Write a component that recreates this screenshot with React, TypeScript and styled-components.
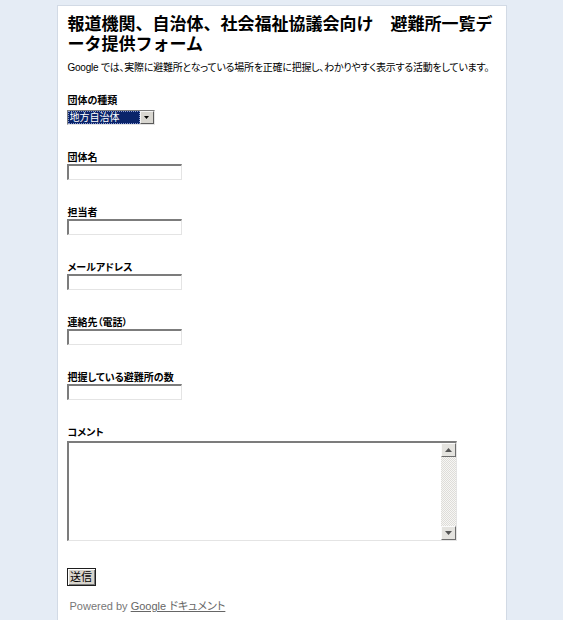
import React from 'react';
import styled, { createGlobalStyle } from 'styled-components';

const Theme = createGlobalStyle`
    html, body {
        margin: 0;
        padding: 0;
        background: #e5ecf5;
        font-family: "Liberation Sans", "Noto Sans CJK JP", sans-serif;
        color: #000;
    }
`;

const Page = styled.div`
    display: flex;
    justify-content: center;
    padding-top: 5px;
    min-height: 100vh;
    box-sizing: border-box;
`;

const Sheet = styled.main`
    width: 450px;
    box-sizing: border-box;
    min-height: calc(100vh - 5px);
    background: #fff;
    border: 1px solid #d2dae5;
    border-bottom: none;
    padding: 9px 11px 20px 9px;
`;

const Title = styled.h1`
    margin: 0 0 6px 1px;
    font-size: 17px;
    line-height: 20px;
    font-weight: bold;
`;

const Intro = styled.p`
    margin: 0 0 19px 1px;
    font-size: 10px;
    line-height: 14px;
    letter-spacing: -0.25px;
    white-space: nowrap;
    font-feature-settings: "palt";
`;

const Form = styled.form`
    display: flex;
    flex-direction: column;
    align-items: flex-start;
    gap: 26px;
`;

const Field = styled.div`
    display: flex;
    flex-direction: column;
    align-items: flex-start;
`;

const Label = styled.label<{ $space?: number }>`
    display: block;
    margin: 0 0 ${(p) => p.$space ?? 0}px 1px;
    font-size: 10px;
    line-height: 13px;
    font-weight: bold;
    font-feature-settings: "palt";
`;

const sunken = `
    border-style: solid;
    border-color: #7c7c7c #e4e4e4 #e4e4e4 #7c7c7c;
`;

const TextInput = styled.input`
    ${sunken}
    border-width: 2px 1px 1px 2px;
    width: 115px;
    height: 16px;
    box-sizing: border-box;
    padding: 0 2px;
    margin: 0;
    font: 11px "Liberation Sans", "Noto Sans CJK JP", sans-serif;
    background: #fff;
    outline: none;
`;

const SelectFrame = styled.div`
    ${sunken}
    border-width: 1px;
    width: 88px;
    height: 15px;
    box-sizing: border-box;
    display: flex;
    background: #fff;
`;

const Select = styled.select`
    appearance: none;
    flex: 1;
    min-width: 0;
    height: 13px;
    margin: 0;
    padding: 0 0 0 1px;
    border: 1px dotted #8a9ad0;
    box-sizing: border-box;
    background: #0a246a;
    color: #fff;
    font: 10px/11px "Liberation Sans", "Noto Sans CJK JP", sans-serif;
    outline: none;
`;

const DropButton = styled.span`
    width: 14px;
    height: 13px;
    box-sizing: border-box;
    display: flex;
    align-items: center;
    justify-content: center;
    background: #d8d6d0;
    border-style: solid;
    border-width: 1px;
    border-color: #f4f4f4 #5a5a5a #5a5a5a #f4f4f4;
`;

const CommentFrame = styled.div`
    ${sunken}
    border-width: 2px 1px 1px 2px;
    width: 390px;
    height: 100px;
    box-sizing: border-box;
    display: flex;
    margin-top: 2px;
    background: #fff;
`;

const CommentArea = styled.textarea`
    flex: 1;
    border: none;
    margin: 0;
    padding: 2px;
    resize: none;
    outline: none;
    overflow: hidden;
    font: 11px "Liberation Sans", "Noto Sans CJK JP", sans-serif;
`;

const ScrollTrack = styled.div`
    width: 15px;
    display: flex;
    flex-direction: column;
    justify-content: space-between;
    background: repeating-conic-gradient(#f6f6f4 0 25%, #dedcd8 0 50%) 0 0 / 2px 2px;
`;

const ScrollButton = styled.span`
    width: 15px;
    height: 14px;
    box-sizing: border-box;
    display: flex;
    align-items: center;
    justify-content: center;
    background: #e4e3df;
    border-style: solid;
    border-width: 1px;
    border-color: #fafafa #6e6e6e #6e6e6e #fafafa;
`;

const Submit = styled.button`
    margin-top: 1px;
    width: 29px;
    height: 18px;
    padding: 0;
    box-sizing: border-box;
    border: 1px solid #1e1e1e;
    box-shadow: inset 1px 1px 0 #fff, inset -1px -1px 0 #7a7a7a;
    background: #d8d5cd;
    font: 11px/14px "Liberation Sans", "Noto Sans CJK JP", sans-serif;
    color: #000;
`;

const Footer = styled.p`
    margin: 13px 0 0 3px;
    font-size: 11px;
    line-height: 14px;
    color: #777;
    font-feature-settings: "palt";
`;

const FooterLink = styled.a`
    color: #666;
    text-decoration: underline;
`;

const Arrow = ({ up }: { up?: boolean }) => (
    <svg width="7" height="4" viewBox="0 0 7 4">
        <path d={up ? 'M0 4 L3.5 0 L7 4 Z' : 'M0 0 L7 0 L3.5 4 Z'} fill="#555" />
    </svg>
);

const textFields = ['団体名', '担当者', 'メールアドレス', '連絡先（電話）', '把握している避難所の数'];

export default function App() {
    return (
        <Page>
            <Theme />
            <Sheet>
                <Title>報道機関、自治体、社会福祉協議会向け　避難所一覧データ提供フォーム</Title>
                <Intro>
                    Google では、実際に避難所となっている場所を正確に把握し、わかりやすく表示する活動をしています。
                </Intro>
                <Form onSubmit={(e) => e.preventDefault()}>
                    <Field>
                        <Label $space={3}>団体の種類</Label>
                        <SelectFrame>
                            <Select defaultValue="地方自治体">
                                <option>地方自治体</option>
                                <option>報道機関</option>
                                <option>社会福祉協議会</option>
                            </Select>
                            <DropButton>
                                <svg width="5" height="3" viewBox="0 0 5 3">
                                    <path d="M0 0 L5 0 L2.5 3 Z" fill="#000" />
                                </svg>
                            </DropButton>
                        </SelectFrame>
                    </Field>
                    {textFields.map((name) => (
                        <Field key={name}>
                            <Label>{name}</Label>
                            <TextInput type="text" />
                        </Field>
                    ))}
                    <Field>
                        <Label>コメント</Label>
                        <CommentFrame>
                            <CommentArea />
                            <ScrollTrack>
                                <ScrollButton>
                                    <Arrow up />
                                </ScrollButton>
                                <ScrollButton>
                                    <Arrow />
                                </ScrollButton>
                            </ScrollTrack>
                        </CommentFrame>
                    </Field>
                    <Submit type="submit">送信</Submit>
                </Form>
                <Footer>
                    Powered by <FooterLink href="#">Google ドキュメント</FooterLink>
                </Footer>
            </Sheet>
        </Page>
    );
}
